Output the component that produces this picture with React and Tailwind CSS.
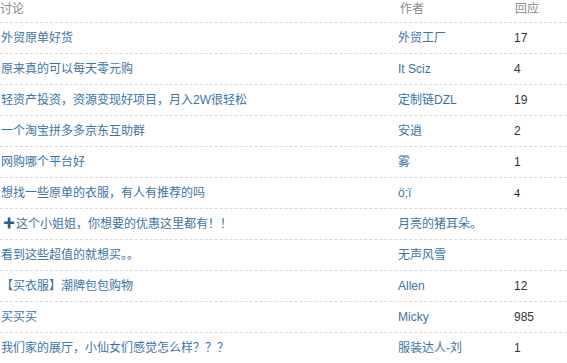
import React from "react";

const topics = [
  { title: "外贸原单好货", author: "外贸工厂", replies: "17" },
  { title: "原来真的可以每天零元购", author: "It Sciz", replies: "4" },
  { title: "轻资产投资，资源变现好项目，月入2W很轻松", author: "定制链DZL", replies: "19" },
  { title: "一个淘宝拼多多京东互助群", author: "安逍", replies: "2" },
  { title: "网购哪个平台好", author: "雾", replies: "1" },
  { title: "想找一些原单的衣服，有人有推荐的吗", author: "ö;ï", replies: "4", serif: true },
  { title: "这个小姐姐，你想要的优惠这里都有！！", author: "月亮的猪耳朵。", replies: "", plus: true },
  { title: "看到这些超值的就想买。。", author: "无声风雪", replies: "" },
  { title: "【买衣服】潮牌包包购物", author: "Allen", replies: "12" },
  { title: "买买买", author: "Micky", replies: "985" },
  { title: "我们家的展厅，小仙女们感觉怎么样？？？", author: "服装达人-刘", replies: "1" },
];

export default function App() {
  return (
    <div
      className="w-[567px] h-[363px] overflow-hidden bg-white text-[12px]"
      style={{ fontFamily: '"Liberation Sans", "Noto Sans CJK SC", sans-serif' }}
    >
      {/* header */}
      <div className="grid grid-cols-[398px_116px_1fr] h-[23px] border-b border-dashed border-[#d8d8d8] text-[#888] leading-[16px] pt-[1px]">
        <span>讨论</span>
        <span className="pl-[2px]">作者</span>
        <span className="pl-[1px]">回应</span>
      </div>

      {topics.map((t, i) => (
        <div
          key={i}
          className="grid grid-cols-[398px_116px_1fr] items-center h-[31px] border-b border-dashed border-[#d8d8d8]"
        >
          <a href="#" className="text-[#3b74a3] whitespace-nowrap pl-[1px]">
            {t.plus && <span className="text-[#2a5d8c] font-bold mr-[1px] pl-[2px]">✚</span>}
            {t.title}
          </a>
          <a href="#" className="text-[#3b74a3] whitespace-nowrap">
            {t.author}
          </a>
          <span
            className={t.serif ? "text-[#222]" : "text-[#333]"}
            style={t.serif ? { fontFamily: '"Liberation Serif", serif' } : undefined}
          >
            {t.replies}
          </span>
        </div>
      ))}
    </div>
  );
}
